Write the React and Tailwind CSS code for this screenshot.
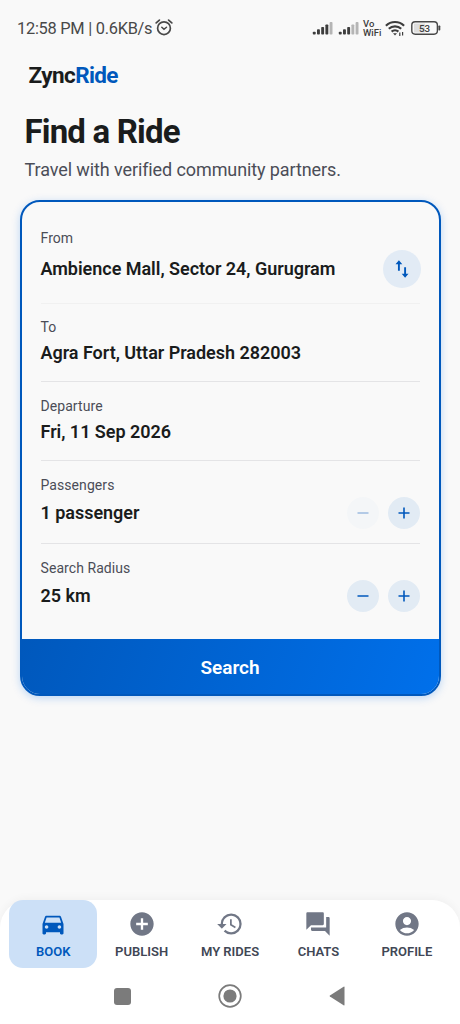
import React, { useState } from 'react';
import { MdAccountCircle, MdAddCircle, MdDirectionsCar, MdForum, MdHistory } from 'react-icons/md';

const TABS = [
  { id: 'book', label: 'BOOK', icon: MdDirectionsCar },
  { id: 'publish', label: 'PUBLISH', icon: MdAddCircle },
  { id: 'rides', label: 'MY RIDES', icon: MdHistory },
  { id: 'chats', label: 'CHATS', icon: MdForum },
  { id: 'profile', label: 'PROFILE', icon: MdAccountCircle },
];

function Signal({ bars }) {
  return (
    <svg width="21" height="14" viewBox="0 0 21 14">
      {[0, 1, 2, 3, 4].map((i) => (
        <rect
          key={i}
          x={0.8 + i * 4.2}
          y={10.7 - i * 2.4}
          width="2.9"
          height={2.8 + i * 2.4}
          rx="0.8"
          fill={i < bars ? '#3d3d3d' : '#b5b5b5'}
        />
      ))}
    </svg>
  );
}

function StatusBar() {
  return (
    <div className="flex h-14 items-center justify-between pl-[17px] pr-[19px] text-[#484848]">
      <div className="flex items-center gap-[3px]">
        <span className="pt-px text-[16.4px] leading-5 tracking-[-0.27px] whitespace-nowrap">12:58 PM | 0.6KB/s</span>
        <svg width="18" height="18" viewBox="0 0 18 18" fill="none" stroke="currentColor" strokeWidth="1.7" strokeLinecap="round">
          <circle cx="9" cy="9.2" r="6.4" />
          <path d="M1.2 3.9 4.4 1.1M16.8 3.9 13.6 1.1" />
          <path d="M6.8 8.2 9 10.3l2.5-2.1" strokeWidth="1.5" />
        </svg>
      </div>
      <div className="flex items-center">
        <Signal bars={4} />
        <span className="w-[5px]" />
        <Signal bars={3} />
        <div className="ml-[4px] w-[20px] text-[9.5px] leading-[9px] font-medium text-[#3d3d3d]">
          <div>Vo</div>
          <div>WiFi</div>
        </div>
        <svg className="ml-[2px]" width="20" height="17" viewBox="0 0 20 17" fill="none" stroke="#3d3d3d" strokeWidth="2.2">
          <path d="M.9 5.7a13 13 0 0 1 18.2 0" />
          <path d="M3.8 8.8a9 9 0 0 1 12.4 0" />
          <path d="M6.6 11.6a5 5 0 0 1 6.8 0" />
          <path d="M8 13.2h4l-2 2.4z" fill="#3d3d3d" stroke="none" />
          <path d="M14.8 16v-3.4M17.6 12v3.4" strokeWidth="1.2" />
        </svg>
        <svg className="ml-[6px]" width="30" height="14" viewBox="0 0 30 14">
          <rect x="3" y="2.5" width="11" height="9" fill="#dedede" />
          <rect x=".8" y=".8" width="25.6" height="12.4" rx="3.4" fill="none" stroke="#484848" strokeWidth="1.4" />
          <rect x="27.4" y="4.5" width="1.9" height="5" rx=".8" fill="#484848" />
          <text x="13.6" y="10.5" textAnchor="middle" fontSize="9.8" fontWeight="500" fill="#3d3d3d">53</text>
        </svg>
      </div>
    </div>
  );
}

function SwapIcon() {
  return (
    <svg width="20" height="20" viewBox="0 0 20 20" fill="none" stroke="#0058bc" strokeWidth="1.9">
      <path d="M6.9 11.8V3.5M13.1 8.2v8.3" />
      <path d="M3.5 5.2 6.9 1.3l3.4 3.9zM9.7 14.8l3.4 3.9 3.4-3.9z" fill="#0058bc" stroke="none" />
    </svg>
  );
}

function RoundButton({ plus, disabled, onClick }) {
  return (
    <button
      type="button"
      disabled={disabled}
      onClick={onClick}
      className="flex size-8 items-center justify-center rounded-full bg-[#e2ebf4] text-[#0058bc] disabled:bg-[#f4f6f8] disabled:text-[#a3c0e2]"
    >
      <svg width="12" height="12" viewBox="0 0 12 12" stroke="currentColor" strokeWidth="1.6">
        <path d={plus ? 'M.5 6h11M6 .5v11' : 'M.5 6h11'} />
      </svg>
    </button>
  );
}

function Field({ label, value, className, gap = 'mt-[6px]', children }) {
  return (
    <div className={`relative ${className}`}>
      <div className="text-[14px] leading-5 tracking-[0.07px] text-[#4b4d57]">{label}</div>
      <div className={`text-[18px] leading-5 font-semibold tracking-[-0.03px] text-[#1a1c1c] ${gap}`}>{value}</div>
      {children}
    </div>
  );
}

export default function App() {
  const [tab, setTab] = useState('book');
  const [trip, setTrip] = useState({
    from: 'Ambience Mall, Sector 24, Gurugram',
    to: 'Agra Fort, Uttar Pradesh 282003',
  });
  const [passengers, setPassengers] = useState(1);
  const [radius, setRadius] = useState(25);

  return (
    <div className="flex h-screen w-full flex-col overflow-hidden bg-[#f9f9f9] font-[Roboto,sans-serif]">
      <StatusBar />

      <header className="px-[28.5px] pt-[5px] text-[22.5px] leading-7 font-bold tracking-[-0.6px] text-[#1a1c1c]">
        Zync<span className="text-[#0058bc]">Ride</span>
      </header>

      <main className="flex-1 px-5">
        <div className="px-[4.5px] pt-[23px]">
          <h1 className="text-[33px] leading-10 font-bold tracking-[-0.83px] text-[#1a1c1c]">Find a Ride</h1>
          <p className="mt-[6px] text-[18px] leading-6 tracking-[-0.1px] text-[#4b4d57]">
            Travel with verified community partners.
          </p>
        </div>

        <section className="mt-[18px] h-[496px] w-[421px] overflow-hidden rounded-[20px] border-2 border-[#0058bc] bg-[#f9f9f9] shadow-[0_2px_8px_rgba(0,112,235,0.25)]">
          <div className="pl-[18.5px] pr-[19px]">
            <Field label="From" value={trip.from} className="h-[102px] border-b border-[#f1f1f1] pt-[26px]" gap="mt-[11px]">
              <button
                type="button"
                onClick={() => setTrip({ from: trip.to, to: trip.from })}
                className="absolute -right-[0.5px] top-[48px] flex size-[38px] items-center justify-center rounded-full bg-[#e2ebf5]"
              >
                <SwapIcon />
              </button>
            </Field>
            <Field label="To" value={trip.to} className="h-[78px] border-b border-[#e4e4e6] pt-[13px]" />
            <Field label="Departure" value="Fri, 11 Sep 2026" className="h-[79px] border-b border-[#e4e4e6] pt-[14px]" />
            <Field
              label="Passengers"
              value={`${passengers} passenger${passengers > 1 ? 's' : ''}`}
              className="h-[83px] border-b border-[#e4e4e6] pt-[14px]"
              gap="mt-[8px]"
            >
              <div className="absolute -right-[0.4px] top-[36px] flex gap-[9px]">
                <RoundButton disabled={passengers === 1} onClick={() => setPassengers(passengers - 1)} />
                <RoundButton plus onClick={() => setPassengers(passengers + 1)} />
              </div>
            </Field>
            <Field label="Search Radius" value={`${radius} km`} className="h-[95px] pt-[14px]" gap="mt-[8px]">
              <div className="absolute -right-[0.4px] top-[36px] flex gap-[9px]">
                <RoundButton onClick={() => setRadius(radius - 5)} />
                <RoundButton plus onClick={() => setRadius(radius + 5)} />
              </div>
            </Field>
          </div>
          <button
            type="button"
            className="flex h-[55px] w-full items-center justify-center bg-linear-[110deg] from-[#0058bc] to-[#0070eb] pt-[3px] pr-px text-[19px] font-semibold tracking-[-0.05px] text-white"
          >
            Search
          </button>
        </section>
      </main>

      <footer className="h-[124px] rounded-t-[28px] bg-white shadow-[0_-2px_8px_rgba(0,0,0,0.04)]">
        <nav className="flex px-[9px]">
          {TABS.map(({ id, label, icon: Icon }) => {
            const active = tab === id;
            return (
              <button
                key={id}
                type="button"
                onClick={() => setTab(id)}
                className={`flex h-[68px] flex-1 flex-col items-center rounded-[14px] pt-[10px] ${active ? 'bg-[#cce0f7] text-[#0058bc]' : ''}`}
              >
                <Icon size={28} className={active ? '' : 'text-[#717786]'} />
                <span className={`mt-[5px] text-[13px] leading-[17px] font-semibold whitespace-nowrap ${active ? '' : 'text-[#414755]'}`}>
                  {label}
                </span>
              </button>
            );
          })}
        </nav>
        <div className="mt-[16px] flex items-center justify-center pr-[1px] text-[#7b7b7b]">
          <div className="size-[17px] rounded-[3px] bg-[#7b7b7b]" />
          <svg className="ml-[87px]" width="24" height="24" viewBox="0 0 24 24">
            <circle cx="12" cy="12" r="10.8" fill="none" stroke="currentColor" strokeWidth="1.7" />
            <circle cx="12" cy="12" r="6.6" fill="currentColor" />
          </svg>
          <svg className="ml-[87px]" width="16" height="20" viewBox="0 0 16 20">
            <path d="M15.5 1.2v17.6q0 .9-.9.4L.9 10.5q-.7-.5 0-1L14.6.8q.9-.5.9.4Z" fill="currentColor" />
          </svg>
        </div>
      </footer>
    </div>
  );
}
